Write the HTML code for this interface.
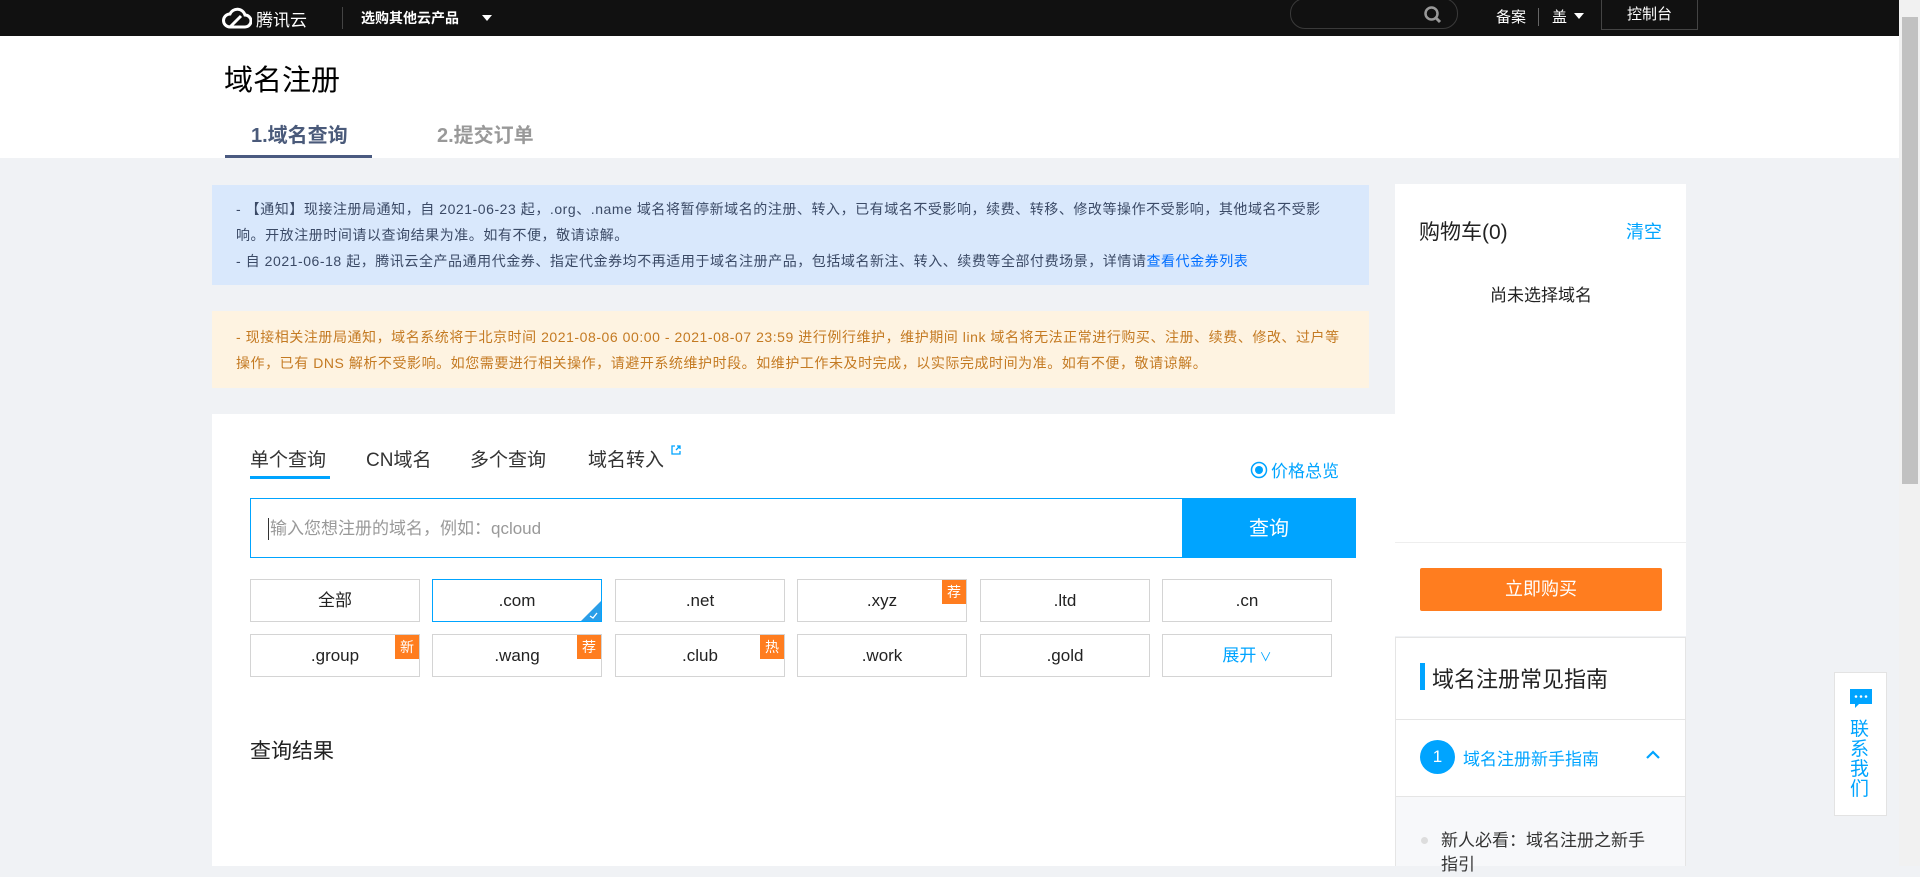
<!DOCTYPE html>
<html><head><meta charset="utf-8"><style>
*{margin:0;padding:0;box-sizing:border-box}
body{width:1920px;height:866px;overflow:hidden;background:#f0f2f5;font-family:"Liberation Sans","Noto Sans CJK SC",sans-serif;color:#333;position:relative}
.abs{position:absolute}
.hdr{left:0;top:0;width:1899px;height:36px;background:#111}
.white{left:0;top:36px;width:1899px;height:122px;background:#fff}
.sb{left:1899px;top:0;width:21px;height:866px;background:#f1f1f1}
.thumb{left:1902px;top:17px;width:16px;height:467px;background:#c1c1c1}
.notice{font-size:14px;line-height:26px;letter-spacing:0.55px}
.dom{position:absolute;width:170px;height:43px;border:1px solid #d4d4d4;background:#fff;font-size:17px;text-align:center;line-height:41px;color:#222}
.badge{position:absolute;right:0;top:0;width:24px;height:24px;background:#ff7d1f;color:#fff;font-size:14px;line-height:24px;text-align:center}
</style></head><body>
<div class="abs hdr"></div>
<svg class="abs" style="left:222px;top:7px" width="30" height="22" viewBox="0 0 30 22"><path d="M8 20 H23 a6 6 0 0 0 0-12 a8 8 0 0 0-15-1 a6.5 6.5 0 0 0 0 13z M8 20 L19 9" fill="none" stroke="#fff" stroke-width="3"/></svg>
<div class="abs" style="left:256px;top:6px;color:#fff;font-size:17px">腾讯云</div>
<div class="abs" style="left:342px;top:7px;width:1px;height:22px;background:#444"></div>
<div class="abs" style="left:361px;top:8px;color:#fff;font-size:14px;font-weight:bold">选购其他云产品</div>
<div class="abs" style="left:482px;top:15px;border:5px solid transparent;border-top:6px solid #fff"></div>
<div class="abs" style="left:1290px;top:-2px;width:168px;height:31px;border:1px solid #3a3a3a;border-radius:15px"></div>
<svg class="abs" style="left:1423px;top:5px" width="20" height="20" viewBox="0 0 20 20"><circle cx="8.5" cy="8.5" r="6" fill="none" stroke="#999" stroke-width="2.5"/><path d="M13 13l4 4" stroke="#999" stroke-width="3"/></svg>
<div class="abs" style="left:1496px;top:6px;color:#fff;font-size:15px">备案</div>
<div class="abs" style="left:1538px;top:8px;width:1px;height:18px;background:#666"></div>
<div class="abs" style="left:1552px;top:6px;color:#fff;font-size:15px">盖</div>
<div class="abs" style="left:1574px;top:13px;border:5px solid transparent;border-top:6px solid #fff"></div>
<div class="abs" style="left:1601px;top:-1px;width:97px;height:31px;border:1px solid #444;color:#fff;font-size:15px;text-align:center;line-height:29px">控制台</div>
<div class="abs white"></div>
<div class="abs" style="left:224px;top:57px;font-size:29px;color:#000">域名注册</div>
<div class="abs" style="left:251px;top:119px;font-size:20px;font-weight:bold;color:#4a5a7a">1.域名查询</div>
<div class="abs" style="left:225px;top:155px;width:147px;height:3px;background:#4a5a80"></div>
<div class="abs" style="left:437px;top:119px;font-size:20px;font-weight:bold;color:#999">2.提交订单</div>
<div class="abs sb"></div><div class="abs thumb"></div>
<div class="abs notice" style="left:212px;top:185px;width:1157px;height:100px;background:#d9e8fc;color:#3b4a66;padding:11px 24px 0">- 【通知】现接注册局通知，自 2021-06-23 起，.org、.name 域名将暂停新域名的注册、转入，已有域名不受影响，续费、转移、修改等操作不受影响，其他域名不受影响。开放注册时间请以查询结果为准。如有不便，敬请谅解。<br>- 自 2021-06-18 起，腾讯云全产品通用代金券、指定代金券均不再适用于域名注册产品，包括域名新注、转入、续费等全部付费场景，详情请<span style="color:#006eff">查看代金券列表</span></div>
<div class="abs notice" style="left:212px;top:311px;width:1157px;height:77px;background:#fef3e1;color:#c47a22;padding:13px 24px 0">- 现接相关注册局通知，域名系统将于北京时间 2021-08-06 00:00 - 2021-08-07 23:59 进行例行维护，维护期间 link 域名将无法正常进行购买、注册、续费、修改、过户等操作，已有 DNS 解析不受影响。如您需要进行相关操作，请避开系统维护时段。如维护工作未及时完成，以实际完成时间为准。如有不便，敬请谅解。</div>
<div class="abs" style="left:212px;top:414px;width:1183px;height:452px;background:#fff"></div>
<div class="abs" style="left:250px;top:445px;font-size:19px">单个查询</div>
<div class="abs" style="left:250px;top:476px;width:80px;height:3px;background:#00a4ff"></div>
<div class="abs" style="left:366px;top:445px;font-size:19px">CN域名</div>
<div class="abs" style="left:470px;top:445px;font-size:19px">多个查询</div>
<div class="abs" style="left:588px;top:445px;font-size:19px">域名转入</div>
<svg class="abs" style="left:671px;top:445px" width="10" height="10" viewBox="0 0 10 10"><path d="M4 1H1v8h8V6M5 5l4-4M6 1h3v3" fill="none" stroke="#00a4ff" stroke-width="1.3"/></svg>
<svg class="abs" style="left:1250px;top:461px" width="18" height="18" viewBox="0 0 18 18"><circle cx="9" cy="9" r="7.5" fill="none" stroke="#00a4ff" stroke-width="1.5"/><circle cx="9" cy="9" r="4" fill="#00a4ff"/></svg>
<div class="abs" style="left:1271px;top:457px;font-size:17px;color:#00a4ff">价格总览</div>
<div class="abs" style="left:250px;top:498px;width:933px;height:60px;border:1px solid #00a4ff"></div>
<div class="abs" style="left:268px;top:518px;font-size:17px;color:#999;border-left:1px solid #333;padding-left:1px;line-height:22px">输入您想注册的域名，例如：qcloud</div>
<div class="abs" style="left:1182px;top:498px;width:174px;height:60px;background:#00a4ff;color:#fff;font-size:20px;text-align:center;line-height:62px">查询</div>
<div class="dom" style="left:250px;top:579px">全部</div>
<div class="dom" style="left:432px;top:579px;border-color:#00a4ff;overflow:hidden">.com<svg style="position:absolute;right:0;bottom:0" width="20" height="20" viewBox="0 0 20 20"><path d="M20 0V20H0z" fill="#2a9ee8"/><path d="M9 15l3 2 4-5" fill="none" stroke="#fff" stroke-width="1.3"/></svg></div>
<div class="dom" style="left:615px;top:579px">.net</div>
<div class="dom" style="left:797px;top:579px">.xyz<span class="badge">荐</span></div>
<div class="dom" style="left:980px;top:579px">.ltd</div>
<div class="dom" style="left:1162px;top:579px">.cn</div>
<div class="dom" style="left:250px;top:634px">.group<span class="badge">新</span></div>
<div class="dom" style="left:432px;top:634px">.wang<span class="badge">荐</span></div>
<div class="dom" style="left:615px;top:634px">.club<span class="badge">热</span></div>
<div class="dom" style="left:797px;top:634px">.work</div>
<div class="dom" style="left:980px;top:634px">.gold</div>
<div class="dom" style="left:1162px;top:634px;color:#00a4ff">展开<span style="font-size:12px"> ∨</span></div>
<div class="abs" style="left:250px;top:735px;font-size:21px;color:#222">查询结果</div>
<div class="abs" style="left:1395px;top:184px;width:291px;height:452px;background:#fff"></div>
<div class="abs" style="left:1395px;top:542px;width:291px;height:1px;background:#eee"></div>
<div class="abs" style="left:1419px;top:216px;font-size:21px;color:#222">购物车(0)</div>
<div class="abs" style="left:1626px;top:218px;font-size:18px;color:#00a4ff">清空</div>
<div class="abs" style="left:1490px;top:281px;font-size:17px;color:#222">尚未选择域名</div>
<div class="abs" style="left:1420px;top:568px;width:242px;height:43px;background:#ff7d1f;border-radius:2px;color:#fff;font-size:18px;text-align:center;line-height:43px">立即购买</div>
<div class="abs" style="left:1395px;top:637px;width:291px;height:229px;background:#fff;border:1px solid #e5e5e5"></div>
<div class="abs" style="left:1420px;top:663px;width:5px;height:27px;background:#00a4ff"></div>
<div class="abs" style="left:1432px;top:662px;font-size:22px;color:#222">域名注册常见指南</div>
<div class="abs" style="left:1396px;top:719px;width:289px;height:1px;background:#e5e5e5"></div>
<div class="abs" style="left:1420px;top:740px;width:35px;height:34px;border-radius:50%;background:#00a4ff;color:#fff;font-size:17px;text-align:center;line-height:34px">1</div>
<div class="abs" style="left:1463px;top:745px;font-size:17px;color:#00a4ff">域名注册新手指南</div>
<svg class="abs" style="left:1645px;top:750px" width="16" height="10" viewBox="0 0 16 10"><path d="M2 8l6-6 6 6" fill="none" stroke="#00a4ff" stroke-width="2.2"/></svg>
<div class="abs" style="left:1396px;top:796px;width:289px;height:70px;background:#f7f8fa;border-top:1px solid #e5e5e5"></div>
<div class="abs" style="left:1421px;top:837px;width:7px;height:7px;border-radius:50%;background:#ddd"></div>
<div class="abs" style="left:1441px;top:829px;font-size:17px;color:#333;width:215px;line-height:24px">新人必看：域名注册之新手指引</div>
<div class="abs" style="left:1834px;top:672px;width:53px;height:144px;background:#fff;border:1px solid #e3e3e3"></div>
<svg class="abs" style="left:1849px;top:688px" width="24" height="22" viewBox="0 0 24 22"><path d="M1 1h22v15H10l-4 4v-4H1z" fill="#00a4ff"/><circle cx="7" cy="8.5" r="1.3" fill="#fff"/><circle cx="12" cy="8.5" r="1.3" fill="#fff"/><circle cx="17" cy="8.5" r="1.3" fill="#fff"/></svg>
<div class="abs" style="left:1850px;top:720px;width:22px;font-size:19px;line-height:20px;color:#00a4ff">联系我们</div>
</body></html>
